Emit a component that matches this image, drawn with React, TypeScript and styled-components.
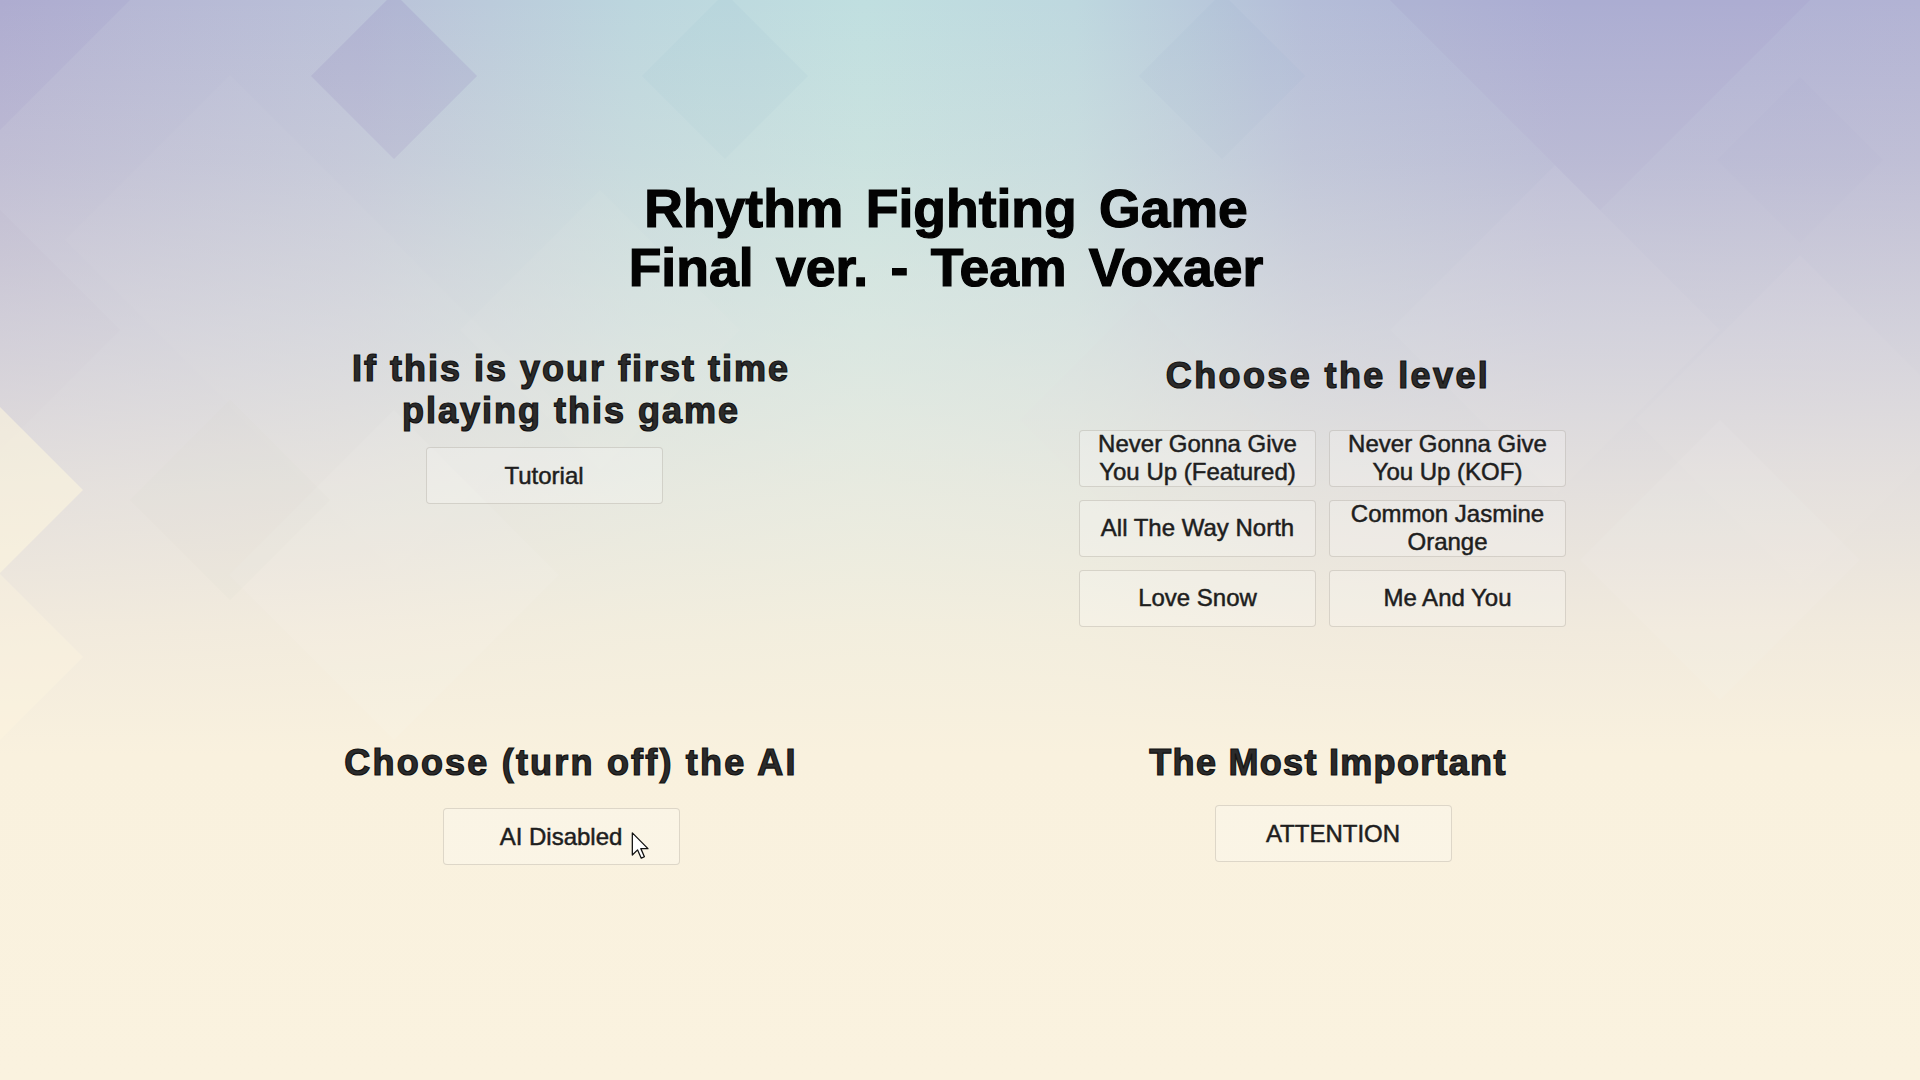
import React from 'react';
import styled, { createGlobalStyle } from 'styled-components';

type Diamond = [number, number, number, string, number];

// faint lattice of diamonds behind the menu
const upperDiamonds: Diamond[] = [
  [0, 0, 130, '#948cc4', 0.14],
  [394, 76, 83, '#8d86c0', 0.22],
  [230, 240, 165, '#ffffff', 0.04],
  [0, 330, 120, '#9a90b8', 0.1],
  [394, 406, 165, '#ffffff', 0.04],
  [725, 76, 83, '#7fb0c8', 0.08],
  [600, 330, 140, '#ffffff', 0.05],
  [1222, 76, 83, '#8fa8c8', 0.08],
  [1600, -30, 240, '#9a98c8', 0.14],
  [1555, 330, 165, '#ffffff', 0.05],
  [1800, 160, 83, '#9a98c8', 0.08],
  [1800, 420, 165, '#ffffff', 0.05],
  [1140, 420, 120, '#c8b8d0', 0.07],
];

const lowerDiamonds: Diamond[] = [
  [0, 490, 83, '#fff7df', 0.55],
  [0, 657, 83, '#fff7df', 0.35],
  [394, 575, 165, '#ffffff', 0.08],
  [230, 500, 100, '#d9d6d0', 0.1],
  [1720, 560, 140, '#ffffff', 0.07],
];

const poly = ([cx, cy, r, c, o]: Diamond) =>
  `<polygon points='${cx},${cy - r} ${cx + r},${cy} ${cx},${cy + r} ${cx - r},${cy}' fill='${c}' fill-opacity='${o}'/>`;

const backdrop = `<svg xmlns='http://www.w3.org/2000/svg' width='1920' height='1080' viewBox='0 0 1920 1080'>
<defs>
<linearGradient id='h' x1='0' y1='0' x2='1' y2='0'>
<stop offset='0' stop-color='#b3b2d2'/><stop offset='0.18' stop-color='#bac0d8'/>
<stop offset='0.33' stop-color='#bcd6de'/><stop offset='0.45' stop-color='#c0dfe0'/>
<stop offset='0.56' stop-color='#bed8df'/><stop offset='0.68' stop-color='#b4bdd8'/>
<stop offset='0.82' stop-color='#aeb1d4'/><stop offset='1' stop-color='#b2b3d4'/>
</linearGradient>
<linearGradient id='v' x1='0' y1='0' x2='0' y2='1'>
<stop offset='0' stop-color='#f9f1de' stop-opacity='0'/>
<stop offset='0.15' stop-color='#f7f0de' stop-opacity='0.2'/>
<stop offset='0.3' stop-color='#f2eee2' stop-opacity='0.5'/>
<stop offset='0.45' stop-color='#f4eee0' stop-opacity='0.76'/>
<stop offset='0.58' stop-color='#f8f0de' stop-opacity='0.9'/>
<stop offset='0.7' stop-color='#f9f1de' stop-opacity='1'/>
<stop offset='1' stop-color='#faf2df' stop-opacity='1'/>
</linearGradient>
</defs>
<rect width='1920' height='1080' fill='url(#h)'/>
${upperDiamonds.map(poly).join('')}
<rect width='1920' height='1080' fill='url(#v)'/>
${lowerDiamonds.map(poly).join('')}
</svg>`;

const GlobalStyle = createGlobalStyle`
  html, body {
    margin: 0;
    padding: 0;
  }
  body {
    font-family: "Liberation Sans", Arial, sans-serif;
    overflow: hidden;
  }
`;

const Page = styled.main`
  width: 1920px;
  height: 1080px;
  box-sizing: border-box;
  padding-top: 179px;
  background-color: #f9f1de;
  background-image: url("data:image/svg+xml,${encodeURIComponent(backdrop)}");
  background-size: 1920px 1080px;
  position: relative;
`;

const Title = styled.h1`
  margin: 0;
  padding-right: 28px;
  font-size: 53.5px;
  line-height: 59px;
  font-weight: 700;
  word-spacing: 7.5px;
  text-align: center;
  color: #030303;
  -webkit-text-stroke: 1.2px #000;
`;

const Sections = styled.div`
  display: grid;
  grid-template-columns: 762px 752px;
  row-gap: 115px;
  margin-top: 51px;
  padding-left: 190px;
`;

const Cell = styled.section`
  display: flex;
  flex-direction: column;
  align-items: center;
`;

const Heading = styled.h2<{ $offset?: number; $spacing?: number }>`
  margin: ${({ $offset }) => $offset ?? 0}px 0 0;
  font-size: 36px;
  line-height: 41.5px;
  font-weight: 700;
  letter-spacing: ${({ $spacing }) => $spacing ?? 2}px;
  text-align: center;
  color: #2b2b2b;
  -webkit-text-stroke: 1.2px #121212;
`;

const MenuButton = styled.button<{ $top?: number; $shift?: number }>`
  position: relative;
  width: 237px;
  height: 57px;
  margin-top: ${({ $top }) => $top ?? 0}px;
  margin-left: ${({ $shift }) => Math.max(0, ($shift ?? 0) * 2)}px;
  margin-right: ${({ $shift }) => Math.max(0, -($shift ?? 0) * 2)}px;
  padding: 0 10px;
  box-sizing: border-box;
  display: flex;
  align-items: center;
  justify-content: center;
  background: rgba(255, 255, 255, 0.22);
  border: 1px solid rgba(120, 110, 95, 0.22);
  border-radius: 4px;
  font-family: "Liberation Sans", Arial, sans-serif;
  font-size: 24px;
  line-height: 1.15;
  color: #1e1e1e;
  -webkit-text-stroke: 0.5px #1e1e1e;
  text-align: center;
  cursor: default;
`;

const LevelGrid = styled.div`
  display: grid;
  grid-template-columns: 237px 237px;
  column-gap: 13px;
  row-gap: 13px;
  margin-top: 33px;
  margin-right: 11px;

  & > ${MenuButton} {
    margin: 0;
  }
`;

const Pointer = styled.svg`
  position: absolute;
  left: 187px;
  top: 23px;
  width: 18px;
  height: 27px;
  pointer-events: none;
`;

const levels = [
  'Never Gonna Give You Up (Featured)',
  'Never Gonna Give You Up (KOF)',
  'All The Way North',
  'Common Jasmine Orange',
  'Love Snow',
  'Me And You',
];

const App: React.FC = () => {
  return (
    <>
      <GlobalStyle />
      <Page>
        <Title>
          Rhythm Fighting Game
          <br />
          Final ver. - Team Voxaer
        </Title>

        <Sections>
          <Cell>
            <Heading>
              If this is your first time
              <br />
              playing this game
            </Heading>
            <MenuButton $top={16} $shift={-27}>Tutorial</MenuButton>
          </Cell>

          <Cell>
            <Heading $offset={7} $spacing={2.4}>Choose the level</Heading>
            <LevelGrid>
              {levels.map((name) => (
                <MenuButton key={name}>{name}</MenuButton>
              ))}
            </LevelGrid>
          </Cell>

          <Cell>
            <Heading $spacing={2.2}>Choose (turn off) the AI</Heading>
            <MenuButton $top={25} $shift={-10}>
              AI Disabled
              <Pointer viewBox="0 0 12 19">
                <path
                  d="M0.6 0.6 V16.2 L4.3 12.6 L6.9 18.4 L9.1 17.4 L6.6 11.7 H11.6 Z"
                  fill="#fff"
                  stroke="#111"
                  strokeWidth="0.9"
                  strokeLinejoin="round"
                />
              </Pointer>
            </MenuButton>
          </Cell>

          <Cell>
            <Heading $spacing={1.3}>The Most Important</Heading>
            <MenuButton $top={22} $shift={5}>ATTENTION</MenuButton>
          </Cell>
        </Sections>
      </Page>
    </>
  );
};

export default App;
